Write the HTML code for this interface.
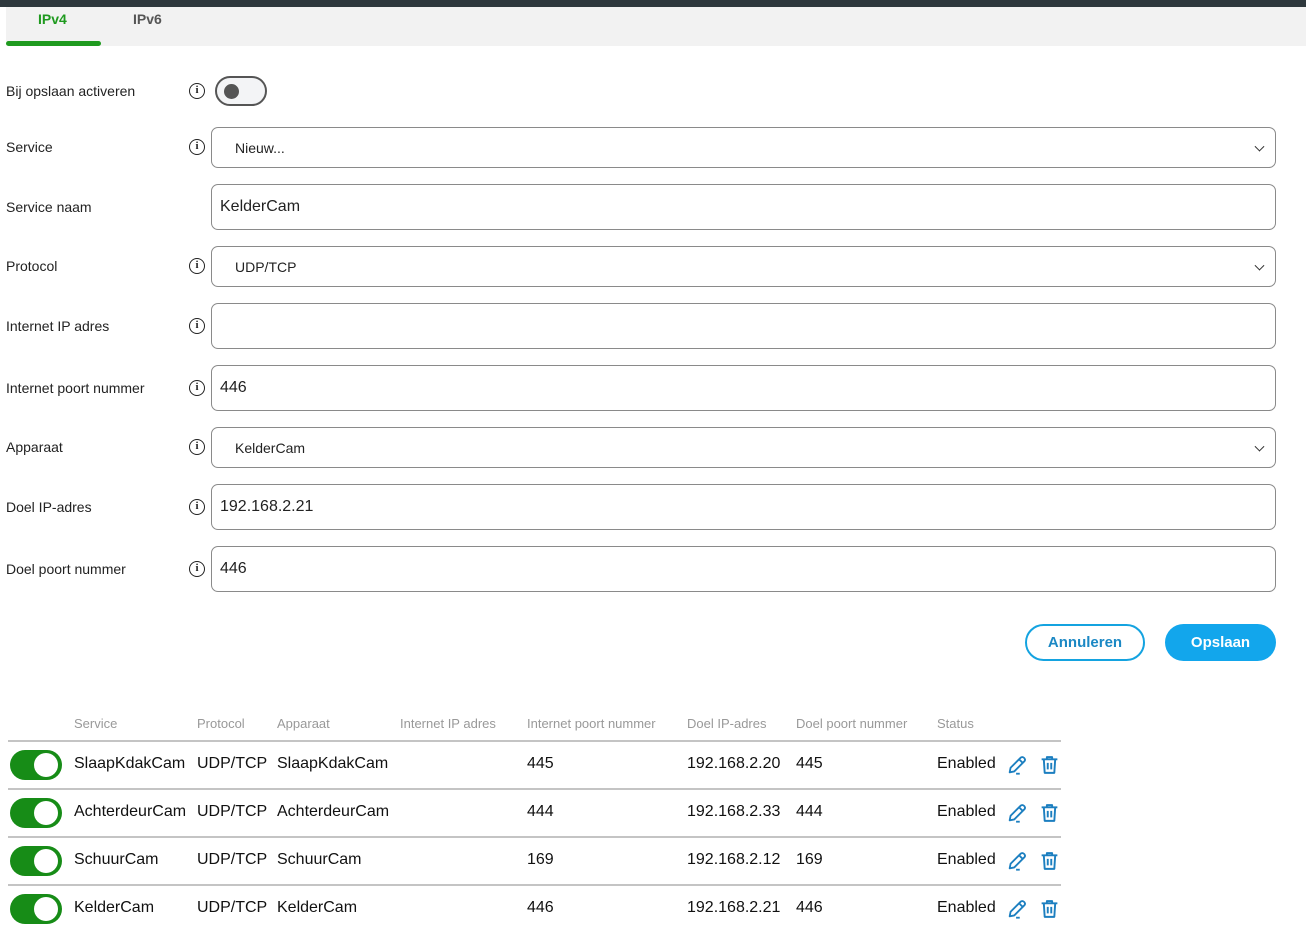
<!DOCTYPE html>
<html><head><meta charset="utf-8"><style>
*{box-sizing:border-box;margin:0;padding:0}
body{width:1306px;height:934px;background:#fff;position:relative;overflow:hidden;font-family:"Liberation Sans",sans-serif;color:#222}
.a{position:absolute}
.lbl{position:absolute;left:6px;font-size:14px;color:#222;transform:translateY(-50%)}
.info{position:absolute;left:189px;width:16px;height:16px;border:1.8px solid #222;border-radius:50%;transform:translateY(-50%);font-size:11px;font-weight:bold;text-align:center;line-height:12px;font-family:"Liberation Serif",serif}
.f{position:absolute;left:211px;width:1065px;border:1px solid #8a8a8a;border-radius:7px;background:#fff;display:flex;align-items:center}
.sel{font-size:14px;padding-left:23px}
.inp{font-size:16px;padding-left:8px}
.chev{position:absolute;right:12px;top:50%;width:7px;height:7px;border-right:1.6px solid #333;border-bottom:1.6px solid #333;transform:translateY(-70%) rotate(45deg)}
.th{position:absolute;top:716px;font-size:13px;color:#999}
.td{position:absolute;font-size:16px;color:#111;transform:translateY(-50%);margin-top:1px}
.hl{position:absolute;height:2px;background:#c4c4c4}
.tg{position:absolute;left:10px;width:52px;height:30px;border-radius:15px;background:#178c17;transform:translateY(-50%)}
.tg:after{content:"";position:absolute;right:4px;top:3px;width:24px;height:24px;border-radius:50%;background:#fff}
</style></head><body>
<div class="a" style="left:0;top:0;width:1306px;height:7px;background:#2e383d"></div>
<div class="a" style="left:6px;top:7px;width:1300px;height:39px;background:#f2f2f2;border-radius:0 0 0 6px"></div>
<div class="a" style="left:38px;top:11px;font-size:14px;font-weight:bold;color:#1f9a1f">IPv4</div>
<div class="a" style="left:133px;top:11px;font-size:14px;font-weight:bold;color:#555">IPv6</div>
<div class="a" style="left:6px;top:41px;width:95px;height:5px;background:#1f9a1f;border-radius:3px"></div>

<div class="lbl" style="top:91px">Bij opslaan activeren</div><div class="info" style="top:91px">i</div>
<div class="a" style="left:215px;top:76px;width:52px;height:30px;border:2px solid #555;border-radius:15px;background:#f3f4f6"><div class="a" style="left:7px;top:6px;width:15px;height:15px;border-radius:50%;background:#555"></div></div>

<div class="lbl" style="top:147px">Service</div><div class="info" style="top:147px">i</div>
<div class="f sel" style="top:127px;height:41px">Nieuw...<span class="chev"></span></div>
<div class="lbl" style="top:207px">Service naam</div>
<div class="f inp" style="top:184px;height:46px">KelderCam</div>
<div class="lbl" style="top:266px">Protocol</div><div class="info" style="top:266px">i</div>
<div class="f sel" style="top:246px;height:41px">UDP/TCP<span class="chev"></span></div>
<div class="lbl" style="top:326px">Internet IP adres</div><div class="info" style="top:326px">i</div>
<div class="f inp" style="top:303px;height:46px"></div>
<div class="lbl" style="top:388px">Internet poort nummer</div><div class="info" style="top:388px">i</div>
<div class="f inp" style="top:365px;height:46px">446</div>
<div class="lbl" style="top:447px">Apparaat</div><div class="info" style="top:447px">i</div>
<div class="f sel" style="top:427px;height:41px">KelderCam<span class="chev"></span></div>
<div class="lbl" style="top:507px">Doel IP-adres</div><div class="info" style="top:507px">i</div>
<div class="f inp" style="top:484px;height:46px">192.168.2.21</div>
<div class="lbl" style="top:569px">Doel poort nummer</div><div class="info" style="top:569px">i</div>
<div class="f inp" style="top:546px;height:46px">446</div>

<div class="a" style="left:1025px;top:624px;width:120px;height:37px;border:2px solid #14a3e0;border-radius:19px;color:#1b88c4;font-size:15px;font-weight:bold;text-align:center;line-height:33px">Annuleren</div>
<div class="a" style="left:1165px;top:624px;width:111px;height:37px;background:#12a6ec;border-radius:19px;color:#fff;font-size:15px;font-weight:bold;text-align:center;line-height:37px">Opslaan</div>

<div class="th" style="left:74px">Service</div>
<div class="th" style="left:197px">Protocol</div>
<div class="th" style="left:277px">Apparaat</div>
<div class="th" style="left:400px">Internet IP adres</div>
<div class="th" style="left:527px">Internet poort nummer</div>
<div class="th" style="left:687px">Doel IP-adres</div>
<div class="th" style="left:796px">Doel poort nummer</div>
<div class="th" style="left:937px">Status</div>

<div class="hl" style="left:8px;top:740px;width:1053px"></div>
<div class="hl" style="left:8px;top:788px;width:1053px"></div>
<div class="hl" style="left:8px;top:836px;width:1053px"></div>
<div class="hl" style="left:8px;top:884px;width:1053px"></div>

<svg width="0" height="0" style="position:absolute"><defs>
<symbol id="pen" viewBox="0 0 24 24"><path d="M4 20 L5 15 L16 4 Q18 2.5 20 4.5 Q21.5 6.5 20 8 L9 19 Z M14.5 6 L18 9.5" fill="none" stroke="#1c7fc0" stroke-width="2" stroke-linejoin="round"/><path d="M11 21.5 H15" stroke="#1c7fc0" stroke-width="2"/></symbol>
<symbol id="bin" viewBox="0 0 24 24"><path d="M3 5.5 H21 M9 5.5 V3 H15 V5.5 M5.5 5.5 L6.5 21 H17.5 L18.5 5.5 M10 9.5 V17 M14 9.5 V17" fill="none" stroke="#1c7fc0" stroke-width="2.2" stroke-linejoin="round"/></symbol>
</defs></svg>

<div class="tg" style="top:765px"></div>
<div class="td" style="left:74px;top:763px">SlaapKdakCam</div><div class="td" style="left:197px;top:763px">UDP/TCP</div><div class="td" style="left:277px;top:763px">SlaapKdakCam</div><div class="td" style="left:527px;top:763px">445</div><div class="td" style="left:687px;top:763px">192.168.2.20</div><div class="td" style="left:796px;top:763px">445</div><div class="td" style="left:937px;top:763px">Enabled</div>
<svg class="a" style="left:1006px;top:754px" width="22" height="22"><use href="#pen"/></svg><svg class="a" style="left:1039px;top:754px" width="21" height="22"><use href="#bin"/></svg>

<div class="tg" style="top:813px"></div>
<div class="td" style="left:74px;top:811px">AchterdeurCam</div><div class="td" style="left:197px;top:811px">UDP/TCP</div><div class="td" style="left:277px;top:811px">AchterdeurCam</div><div class="td" style="left:527px;top:811px">444</div><div class="td" style="left:687px;top:811px">192.168.2.33</div><div class="td" style="left:796px;top:811px">444</div><div class="td" style="left:937px;top:811px">Enabled</div>
<svg class="a" style="left:1006px;top:802px" width="22" height="22"><use href="#pen"/></svg><svg class="a" style="left:1039px;top:802px" width="21" height="22"><use href="#bin"/></svg>

<div class="tg" style="top:861px"></div>
<div class="td" style="left:74px;top:859px">SchuurCam</div><div class="td" style="left:197px;top:859px">UDP/TCP</div><div class="td" style="left:277px;top:859px">SchuurCam</div><div class="td" style="left:527px;top:859px">169</div><div class="td" style="left:687px;top:859px">192.168.2.12</div><div class="td" style="left:796px;top:859px">169</div><div class="td" style="left:937px;top:859px">Enabled</div>
<svg class="a" style="left:1006px;top:850px" width="22" height="22"><use href="#pen"/></svg><svg class="a" style="left:1039px;top:850px" width="21" height="22"><use href="#bin"/></svg>

<div class="tg" style="top:909px"></div>
<div class="td" style="left:74px;top:907px">KelderCam</div><div class="td" style="left:197px;top:907px">UDP/TCP</div><div class="td" style="left:277px;top:907px">KelderCam</div><div class="td" style="left:527px;top:907px">446</div><div class="td" style="left:687px;top:907px">192.168.2.21</div><div class="td" style="left:796px;top:907px">446</div><div class="td" style="left:937px;top:907px">Enabled</div>
<svg class="a" style="left:1006px;top:898px" width="22" height="22"><use href="#pen"/></svg><svg class="a" style="left:1039px;top:898px" width="21" height="22"><use href="#bin"/></svg>
</body></html>
